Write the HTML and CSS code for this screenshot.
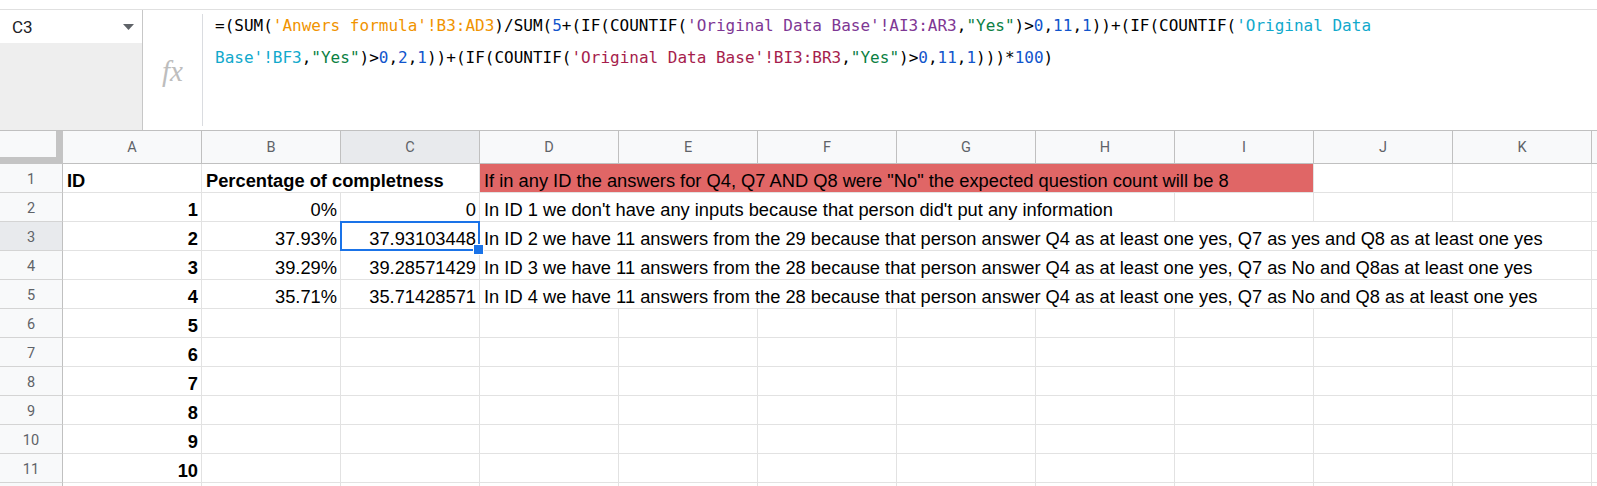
FILE: index.html
```html
<!DOCTYPE html>
<html>
<head>
<meta charset="utf-8">
<link rel="stylesheet" href="styles.css">
</head>
<body>
<div class="formula-bar">
  <div class="namebox">
    <div class="namebox-top">
      <span class="ref">C3</span>
      <svg class="caret" width="11" height="6" viewBox="0 0 11 6"><polygon points="0,0 11,0 5.5,6" fill="#5f6368"/></svg>
    </div>
    <div class="namebox-rest"></div>
  </div>
  <div class="fx"><span>fx</span></div>
  <div class="sep"></div>
  <div class="formula">
    <div class="fline">=(SUM(<span class="c-or">'Anwers formula'!B3:AD3</span>)/SUM(<span class="c-num">5</span>+(IF(COUNTIF(<span class="c-pu">'Original Data Base'!AI3:AR3</span>,<span class="c-str">"Yes"</span>)&gt;<span class="c-num">0</span>,<span class="c-num">11</span>,<span class="c-num">1</span>))+(IF(COUNTIF(<span class="c-cy">'Original Data</span></div>
    <div class="fline"><span class="c-cy">Base'!BF3</span>,<span class="c-str">"Yes"</span>)&gt;<span class="c-num">0</span>,<span class="c-num">2</span>,<span class="c-num">1</span>))+(IF(COUNTIF(<span class="c-cr">'Original Data Base'!BI3:BR3</span>,<span class="c-str">"Yes"</span>)&gt;<span class="c-num">0</span>,<span class="c-num">11</span>,<span class="c-num">1</span>)))*<span class="c-num">100</span>)</div>
  </div>
</div>

<div class="sheet">
  <div class="corner"></div>
  <div class="ch">A</div><div class="ch">B</div><div class="ch ch-sel">C</div><div class="ch">D</div><div class="ch">E</div><div class="ch">F</div><div class="ch">G</div><div class="ch">H</div><div class="ch">I</div><div class="ch">J</div><div class="ch">K</div><div class="ch"></div>

  <div class="rh">1</div>
  <div class="c b">ID</div>
  <div class="c b span2">Percentage of completness</div>
  <div class="c span6 red">If in any ID the answers for Q4, Q7 AND Q8 were "No" the expected question count will be 8</div>
  <div class="c"></div><div class="c"></div><div class="c"></div>

  <div class="rh">2</div>
  <div class="c b r">1</div>
  <div class="c r">0%</div>
  <div class="c r">0</div>
  <div class="c span5">In ID 1 we don't have any inputs because that person did't put any information</div>
  <div class="c"></div><div class="c"></div><div class="c"></div><div class="c"></div>

  <div class="rh rh-sel">3</div>
  <div class="c b r">2</div>
  <div class="c r">37.93%</div>
  <div class="c r sel">37.93103448<div class="sel-box"></div><div class="handle"></div></div>
  <div class="c span8">In ID 2 we have 11 answers from the 29 because that person answer Q4 as at least one yes, Q7 as yes and Q8 as at least one yes</div>
  <div class="c"></div>

  <div class="rh">4</div>
  <div class="c b r">3</div>
  <div class="c r">39.29%</div>
  <div class="c r">39.28571429</div>
  <div class="c span8">In ID 3 we have 11 answers from the 28 because that person answer Q4 as at least one yes, Q7 as No and Q8as at least one yes</div>
  <div class="c"></div>

  <div class="rh">5</div>
  <div class="c b r">4</div>
  <div class="c r">35.71%</div>
  <div class="c r">35.71428571</div>
  <div class="c span8">In ID 4 we have 11 answers from the 28 because that person answer Q4 as at least one yes, Q7 as No and Q8 as at least one yes</div>
  <div class="c"></div>

  <div class="rh">6</div><div class="c b r">5</div>
  <div class="c"></div><div class="c"></div><div class="c"></div><div class="c"></div><div class="c"></div><div class="c"></div><div class="c"></div><div class="c"></div><div class="c"></div><div class="c"></div><div class="c"></div>

  <div class="rh">7</div><div class="c b r">6</div>
  <div class="c"></div><div class="c"></div><div class="c"></div><div class="c"></div><div class="c"></div><div class="c"></div><div class="c"></div><div class="c"></div><div class="c"></div><div class="c"></div><div class="c"></div>

  <div class="rh">8</div><div class="c b r">7</div>
  <div class="c"></div><div class="c"></div><div class="c"></div><div class="c"></div><div class="c"></div><div class="c"></div><div class="c"></div><div class="c"></div><div class="c"></div><div class="c"></div><div class="c"></div>

  <div class="rh">9</div><div class="c b r">8</div>
  <div class="c"></div><div class="c"></div><div class="c"></div><div class="c"></div><div class="c"></div><div class="c"></div><div class="c"></div><div class="c"></div><div class="c"></div><div class="c"></div><div class="c"></div>

  <div class="rh">10</div><div class="c b r">9</div>
  <div class="c"></div><div class="c"></div><div class="c"></div><div class="c"></div><div class="c"></div><div class="c"></div><div class="c"></div><div class="c"></div><div class="c"></div><div class="c"></div><div class="c"></div>

  <div class="rh">11</div><div class="c b r">10</div>
  <div class="c"></div><div class="c"></div><div class="c"></div><div class="c"></div><div class="c"></div><div class="c"></div><div class="c"></div><div class="c"></div><div class="c"></div><div class="c"></div><div class="c"></div>

  <div class="rh"></div><div class="c"></div>
  <div class="c"></div><div class="c"></div><div class="c"></div><div class="c"></div><div class="c"></div><div class="c"></div><div class="c"></div><div class="c"></div><div class="c"></div><div class="c"></div><div class="c"></div>
</div>
</body>
</html>
```

FILE: styles.css
```css
html, body {
  margin: 0;
  padding: 0;
  background: #ffffff;
  overflow: hidden;
  height: 486px;
}

body {
  font-family: "Liberation Sans", Arial, sans-serif;
  color: #000;
}

/* ---------- formula bar ---------- */
.formula-bar {
  margin-top: 9px;
  border-top: 1px solid #e0e0e0;
  height: 120px;
  display: flex;
}

.namebox {
  width: 142px;
  border-right: 1px solid #c7c7c7;
  display: flex;
  flex-direction: column;
}

.namebox-top {
  height: 33px;
  background: #fff;
  display: flex;
  align-items: center;
  justify-content: space-between;
  padding: 0 8px 0 12px;
}

.ref {
  font-family: Roboto, "Liberation Sans", sans-serif;
  font-size: 17px;
  color: #202124;
}

.caret {
  display: block;
}

.namebox-rest {
  flex: 1;
  background: #eeeeee;
}

.fx {
  width: 59px;
  display: flex;
  align-items: center;
  justify-content: center;
}

.fx span {
  font-family: "Liberation Serif", "Times New Roman", serif;
  font-style: italic;
  font-size: 29px;
  color: #bdbdbd;
  margin-top: 2px;
}

.sep {
  width: 1px;
  background: #dadce0;
  margin: 4px 0;
}

.formula {
  flex: 1;
  padding-left: 12px;
  font-family: "DejaVu Sans Mono", "Liberation Mono", monospace;
  font-size: 16px;
  line-height: 32px;
  color: #000;
  white-space: nowrap;
}

.c-or { color: #f09300; }
.c-pu { color: #7e3794; }
.c-cy { color: #11a9cc; }
.c-cr { color: #a61d4c; }
.c-num { color: #1155cc; }
.c-str { color: #0b8043; }

/* ---------- sheet grid ---------- */
.sheet {
  display: grid;
  grid-template-columns: 63px repeat(11, 139px) 1fr;
  grid-template-rows: 33px;
  grid-auto-rows: 29px;
  border-top: 1px solid #c0c0c0;
}

.corner {
  background: #f8f9fa;
  border-right: 7px solid #c4c4c4;
  border-bottom: 7px solid #c4c4c4;
}

.ch {
  background: #f8f9fa;
  border-right: 1px solid #c0c0c0;
  border-bottom: 1px solid #c0c0c0;
  display: flex;
  align-items: center;
  justify-content: center;
  font-family: Roboto, "Liberation Sans", sans-serif;
  font-size: 14.5px;
  color: #5f6368;
}

.ch-sel {
  background: #e8eaed;
}

.rh {
  background: #f8f9fa;
  border-right: 1px solid #c0c0c0;
  border-bottom: 1px solid #d4d4d4;
  display: flex;
  align-items: center;
  justify-content: center;
  padding-top: 2px;
  font-family: Roboto, "Liberation Sans", sans-serif;
  font-size: 14.5px;
  color: #5f6368;
}

.rh-sel {
  background: #e8eaed;
}

.c {
  border-right: 1px solid #e2e2e2;
  border-bottom: 1px solid #e2e2e2;
  display: flex;
  align-items: flex-end;
  padding: 0 3px 1px 4px;
  font-size: 18.3px;
  line-height: 21px;
  white-space: nowrap;
  overflow: hidden;
  min-width: 0;
}

.b { font-weight: bold; }
.r { justify-content: flex-end; }

.span2 { grid-column: span 2; }
.span5 { grid-column: span 5; }
.span6 { grid-column: span 6; }
.span8 { grid-column: span 8; }

.red {
  background: #e06666;
}

.sel {
  position: relative;
  overflow: visible;
  z-index: 2;
}

.sel-box {
  position: absolute;
  left: -1px;
  top: -1px;
  width: 140px;
  height: 30px;
  box-sizing: border-box;
  border: 2px solid #1a73e8;
}

.handle {
  position: absolute;
  left: 132px;
  top: 22px;
  width: 9px;
  height: 9px;
  background: #1a73e8;
  border: 1px solid #ffffff;
}
```
